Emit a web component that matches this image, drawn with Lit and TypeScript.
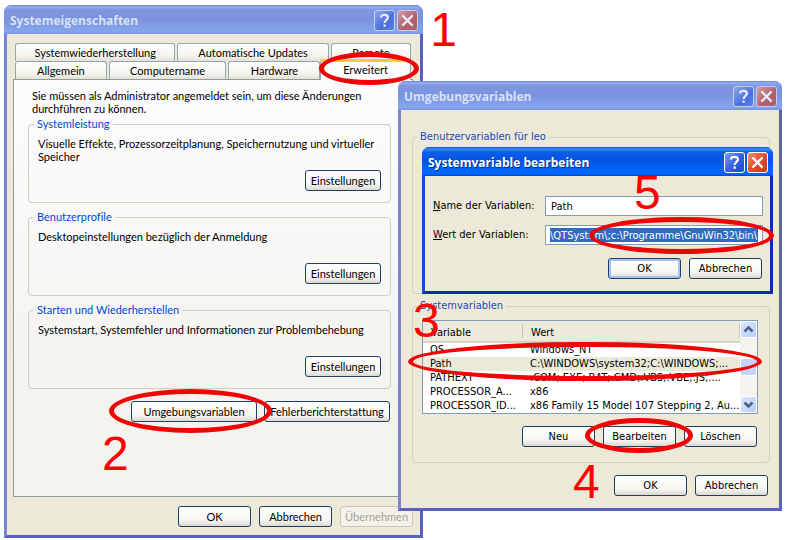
import { LitElement, html, css, svg, nothing } from "lit";
import { customElement, property } from "lit/decorators.js";

@customElement("xp-window")
class XpWindow extends LitElement {
  @property() caption = "";
  @property({ type: Boolean, reflect: true }) active = false;

  static styles = css`
    :host {
      --frame: #7b83d6;
      --frame-dark: #5a5fc0;
      --bar: linear-gradient(#6d86d2 0, #93aeee 7%, #7f97e0 16%, #7b93de 50%, #82a2ea 80%, #84a4ec 93%, #7690dc 100%);
      --caption: #d6e2f8;
      --close: linear-gradient(135deg, #cf9ba4, #b0606c 60%, #a8666f);
      --help: linear-gradient(135deg, #8ca8f0, #4a6fdc 60%, #5b80e4);
      --edge: #c3cff2;
      box-sizing: border-box;
      display: flex;
      flex-direction: column;
      background: #ece9d8;
      border: 3px solid var(--frame);
      border-top: 0;
      border-right-color: var(--frame-dark);
      border-bottom-color: var(--frame-dark);
      border-radius: 8px 8px 0 0;
    }
    :host([active]) {
      --frame: #0a50dc;
      --frame-dark: #0a2fae;
      --bar: linear-gradient(#0a52c8 0, #3c8cf8 7%, #0a5fe8 18%, #0353e1 45%, #0265fb 80%, #0366fe 93%, #0246c4 100%);
      --caption: #ffffff;
      --close: linear-gradient(135deg, #f09070, #e0492a 55%, #c83c16);
      --help: linear-gradient(135deg, #7ca0f8, #2d5fe0 55%, #1c4fd0);
      --edge: #ffffff;
    }
    .bar {
      display: flex;
      align-items: center;
      gap: 2px;
      height: 29px;
      margin: 0 -3px;
      padding: 0 5px 0 6px;
      box-sizing: border-box;
      border-radius: 7px 7px 0 0;
      background: var(--bar);
    }
    h2 {
      flex: 1;
      margin: 0;
      padding-top: 3px;
      color: var(--caption);
      font: bold 12px/20px "Open Sans", sans-serif;
      white-space: nowrap;
    }
    :host([active]) h2 {
      text-shadow: 1px 1px 0 #0a2f8c;
    }
    button {
      width: 21px;
      height: 21px;
      padding: 0;
      margin-top: 2px;
      border: 1px solid var(--edge);
      border-radius: 3px;
      background: var(--help);
    }
    .close {
      background: var(--close);
    }
    svg {
      display: block;
      width: 19px;
      height: 19px;
      fill: none;
      stroke: #ffffff;
      stroke-width: 2.2;
    }
    :host(:not([active])) svg {
      stroke: #e6ebf8;
    }
  `;

  render() {
    return html`
      <div class="bar">
        <h2>${this.caption}</h2>
        <button aria-label="Hilfe">
          <svg viewBox="0 0 19 19">
            <path d="M6 6.6C6 4.6 7.6 3.8 9.5 3.8S13 4.8 13 6.6C13 8.8 9.6 9 9.6 12" />
            <path d="M9.6 13.4V15.8" />
          </svg>
        </button>
        <button class="close" aria-label="Schließen">
          <svg viewBox="0 0 19 19"><path d="M4.4 4.4L14.6 14.6M14.6 4.4L4.4 14.6" /></svg>
        </button>
      </div>
      <slot></slot>
    `;
  }
}

const backTabs = [
  { label: "Systemwiederherstellung", grow: 160 },
  { label: "Automatische Updates", grow: 151 },
  { label: "Remote", grow: 80 },
];
const frontTabs = [
  { label: "Allgemein", grow: 92 },
  { label: "Computername", grow: 118 },
  { label: "Hardware", grow: 92 },
  { label: "Erweitert", grow: 89, selected: true },
];
const groups = [
  { title: "Systemleistung", text: "Visuelle Effekte, Prozessorzeitplanung, Speichernutzung und virtueller Speicher" },
  { title: "Benutzerprofile", text: "Desktopeinstellungen bezüglich der Anmeldung" },
  { title: "Starten und Wiederherstellen", text: "Systemstart, Systemfehler und Informationen zur Problembehebung" },
];
const variables = [
  { name: "OS", value: "Windows_NT" },
  { name: "Path", value: "C:\\WINDOWS\\system32;C:\\WINDOWS;...", selected: true },
  { name: "PATHEXT", value: ".COM;.EXE;.BAT;.CMD;.VBS;.VBE;.JS;...." },
  { name: "PROCESSOR_A...", value: "x86" },
  { name: "PROCESSOR_ID...", value: "x86 Family 15 Model 107 Stepping 2, Au..." },
];

@customElement("app-root")
class AppRoot extends LitElement {
  static styles = css`
    :host {
      display: block;
      position: relative;
      min-height: 540px;
      background: #ffffff;
      color: #000000;
      font: 11px/13px Lato, "Liberation Sans", sans-serif;
      font-variant-ligatures: none;
      overflow: hidden;
    }
    xp-window {
      position: absolute;
    }
    .props {
      left: 4px;
      top: 5px;
      width: calc(50% + 26px);
    }
    .env {
      left: calc(50% + 5px);
      right: 4px;
      top: 81px;
    }
    .edit {
      left: calc(50% + 29px);
      right: 13px;
      top: 147px;
    }
    .env,
    .edit {
      font: 11px/14px "DejaVu Sans Condensed", "DejaVu Sans", sans-serif;
    }
    .btn {
      box-sizing: border-box;
      width: 73px;
      height: 21px;
      padding: 0;
      border: 1px solid #1c3f6e;
      border-radius: 3px;
      background: linear-gradient(#ffffff, #f6f5f0 70%, #dcd8cc);
      color: inherit;
      font: inherit;
      white-space: nowrap;
    }
    .btn:disabled {
      border-color: #c9c7ba;
      background: #f3f2ea;
      color: #a3a195;
    }
    .btn.default {
      box-shadow: inset 0 0 0 2px #a9c3ee;
    }
    .btn.mid {
      width: 76px;
      align-self: flex-end;
    }
    .btn.wide {
      width: 126px;
    }
    .actions {
      display: flex;
      justify-content: flex-end;
      gap: 8px;
    }

    .sheet {
      padding: 9px 7px 8px 6px;
    }
    .tabs {
      display: flex;
      gap: 2px;
      padding: 0 2px;
    }
    .slot {
      display: flex;
      position: relative;
      flex: 1 1 0;
    }
    .tab {
      flex: 1;
      height: 18px;
      padding: 0;
      border: 1px solid #91a7b4;
      border-bottom: 0;
      border-radius: 3px 3px 0 0;
      background: linear-gradient(#ffffff, #f4f3ec 70%, #e4e2d6);
      color: inherit;
      font: inherit;
      white-space: nowrap;
    }
    .selected {
      z-index: 1;
      height: 21px;
      margin: -2px 0 -1px -2px;
      padding-bottom: 4px;
      border-top: 3px solid #ffc73c;
      background: #fcfcfe;
    }
    .panel {
      padding: 9px 21px 74px 14px;
      border: 1px solid #919b9c;
      background: linear-gradient(#fcfcfe, #f4f3ee 75%);
    }
    .panel p {
      margin: 0 0 2px 4px;
    }
    fieldset {
      display: flex;
      flex-direction: column;
      box-sizing: border-box;
      min-width: 0;
      margin: 0;
      border: 1px solid #d0d0bf;
      border-radius: 4px;
    }
    legend {
      margin-left: -4px;
      padding: 0 3px;
      color: #0046d5;
      line-height: 14px;
    }
    .group {
      gap: 7px;
      margin-bottom: 7px;
      padding: 6px 9px 11px;
    }
    .group div {
      min-height: 26px;
    }
    .extra {
      gap: 7px;
      padding: 5px 1px 0 0;
    }
    .sheet .confirm {
      padding-top: 9px;
    }

    .envbody {
      display: flex;
      flex-direction: column;
      padding: 20px 9px 12px 11px;
    }
    .envbody legend {
      margin-left: -5px;
      color: #1c48b8;
    }
    .user {
      min-height: 164px;
      margin-bottom: 5px;
      padding: 0 9px;
    }
    .system {
      gap: 12px;
      padding: 7px 11px 15px 9px;
    }
    .system .actions {
      padding-right: 1px;
    }
    .envbody .confirm {
      padding: 12px 2px 0;
    }
    .list {
      display: flex;
      position: relative;
      box-sizing: border-box;
      height: 94px;
      border: 1px solid #7f9db9;
      background: #ffffff;
    }
    table {
      flex: 1;
      align-self: flex-start;
      table-layout: fixed;
      width: 0;
      border-collapse: collapse;
    }
    th,
    td {
      overflow: hidden;
      padding: 0 0 0 7px;
      font-weight: normal;
      text-align: left;
      white-space: nowrap;
    }
    th {
      height: 17px;
      padding: 3px 0 0 8px;
      border-bottom: 2px solid #d9d5c4;
      background: #ebeadb linear-gradient(#c9c6b6, #c9c6b6) right center / 1px 14px no-repeat;
    }
    th.name {
      width: 92px;
    }
    td {
      height: 14px;
    }
    .current {
      background: #ece9d8;
    }
    .scroll {
      display: flex;
      flex-direction: column;
      width: 17px;
      background: #f4f3ee;
    }
    .scroll button {
      height: 17px;
      padding: 0;
      border: 1px solid #ffffff;
      border-radius: 3px;
      background: linear-gradient(135deg, #dbe6fe, #b9cdf8);
    }
    .scroll svg {
      display: block;
      width: 15px;
      height: 15px;
      fill: none;
      stroke: #4d6185;
      stroke-width: 2.6;
    }
    .track {
      display: flex;
      flex-direction: column;
      justify-content: center;
      flex: 1;
    }
    .thumb {
      height: 16px;
      border: 1px solid #ffffff;
      border-radius: 3px;
      background: #c3d3fb;
    }

    .form {
      display: grid;
      grid-template-columns: 112px 1fr;
      align-items: center;
      gap: 9px 0;
      padding: 20px 7px 12px 8px;
    }
    .form .field {
      display: flex;
      position: relative;
    }
    .form input {
      box-sizing: border-box;
      flex: 1;
      min-width: 0;
      height: 20px;
      padding: 0 5px;
      border: 1px solid #7f9db9;
      outline: 0;
      background: #ffffff;
      color: #000000;
      font: inherit;
    }
    .form .picked {
      padding: 0 4px;
      background: linear-gradient(#316ac5, #316ac5) center / 100% 14px no-repeat content-box, #ffffff;
      color: #ffffff;
    }
    .form .actions {
      grid-column: 1 / -1;
      padding: 4px 1px 0 0;
    }

    .mark {
      position: absolute;
      z-index: 2;
      box-sizing: border-box;
      border: 5px solid #ee0505;
      border-radius: 50%;
      color: #ff0000;
      font: 48px/48px "Liberation Sans", sans-serif;
      pointer-events: none;
    }
    .mark span {
      position: absolute;
    }
    .m1 { inset: -9px -8px -6px -3px; }
    .m1 span { left: 106px; top: -51px; }
    .m2 { inset: -12px -15px -11px -22px; }
    .m2 span { left: -12px; top: 36px; }
    .m3 { inset: 21px -5px 32px -15px; }
    .m3 span { left: 0; top: -50px; }
    .m4 { inset: -8px -17px -6px -18px; }
    .m4 span { left: -17px; top: 35px; }
    .m5 { inset: -8px -11px -9px 44px; }
    .m5 span { left: 40px; top: -53px; }
    .anchor {
      display: flex;
      position: relative;
    }
  `;

  private mark(step: number) {
    return html`<div class="mark m${step}"><span>${step}</span></div>`;
  }

  private tab(t: { label: string; grow: number; selected?: boolean }) {
    return html`
      <div class="slot" style="flex-grow:${t.grow}">
        <button class="tab ${t.selected ? "selected" : ""}" role="tab" aria-selected=${t.selected ? "true" : "false"}>
          ${t.label}
        </button>
        ${t.selected ? this.mark(1) : nothing}
      </div>
    `;
  }

  private arrow(up: boolean) {
    return svg`<path d=${up ? "M3.5 9.5L7.5 5.5L11.5 9.5" : "M3.5 5.5L7.5 9.5L11.5 5.5"} />`;
  }

  render() {
    return html`
      <xp-window class="props" caption="Systemeigenschaften">
        <div class="sheet">
          <div class="tabs" role="tablist">${backTabs.map((t) => this.tab(t))}</div>
          <div class="tabs" role="tablist">${frontTabs.map((t) => this.tab(t))}</div>
          <div class="panel">
            <p>Sie müssen als Administrator angemeldet sein, um diese Änderungen durchführen zu können.</p>
            ${groups.map(
              (g) => html`
                <fieldset class="group">
                  <legend>${g.title}</legend>
                  <div>${g.text}</div>
                  <button class="btn mid">Einstellungen</button>
                </fieldset>
              `
            )}
            <div class="actions extra">
              <div class="anchor">
                <button class="btn wide">Umgebungsvariablen</button>
                ${this.mark(2)}
              </div>
              <button class="btn wide">Fehlerberichterstattung</button>
            </div>
          </div>
          <div class="actions confirm">
            <button class="btn">OK</button>
            <button class="btn">Abbrechen</button>
            <button class="btn" disabled>Übernehmen</button>
          </div>
        </div>
      </xp-window>

      <xp-window class="env" caption="Umgebungsvariablen">
        <div class="envbody">
          <fieldset class="user">
            <legend>Benutzervariablen für leo</legend>
          </fieldset>
          <fieldset class="system">
            <legend>Systemvariablen</legend>
            <div class="list">
              <table>
                <thead>
                  <tr><th class="name">Variable</th><th>Wert</th></tr>
                </thead>
                <tbody>
                  ${variables.map(
                    (v) => html`<tr class=${v.selected ? "current" : ""}><td>${v.name}</td><td>${v.value}</td></tr>`
                  )}
                </tbody>
              </table>
              <div class="scroll">
                <button aria-label="Nach oben"><svg viewBox="0 0 15 15">${this.arrow(true)}</svg></button>
                <div class="track"><div class="thumb"></div></div>
                <button aria-label="Nach unten"><svg viewBox="0 0 15 15">${this.arrow(false)}</svg></button>
              </div>
              ${this.mark(3)}
            </div>
            <div class="actions">
              <button class="btn">Neu</button>
              <div class="anchor">
                <button class="btn">Bearbeiten</button>
                ${this.mark(4)}
              </div>
              <button class="btn">Löschen</button>
            </div>
          </fieldset>
          <div class="actions confirm">
            <button class="btn">OK</button>
            <button class="btn">Abbrechen</button>
          </div>
        </div>
      </xp-window>

      <xp-window class="edit" caption="Systemvariable bearbeiten" active>
        <div class="form">
          <label for="name"><u>N</u>ame der Variablen:</label>
          <div class="field"><input id="name" value="Path" /></div>
          <label for="value"><u>W</u>ert der Variablen:</label>
          <div class="field">
            <input class="picked" id="value" spellcheck="false" value="\\QTSystem\\;c:\\Programme\\GnuWin32\\bin\\" />
            ${this.mark(5)}
          </div>
          <div class="actions">
            <button class="btn default">OK</button>
            <button class="btn">Abbrechen</button>
          </div>
        </div>
      </xp-window>
    `;
  }
}
